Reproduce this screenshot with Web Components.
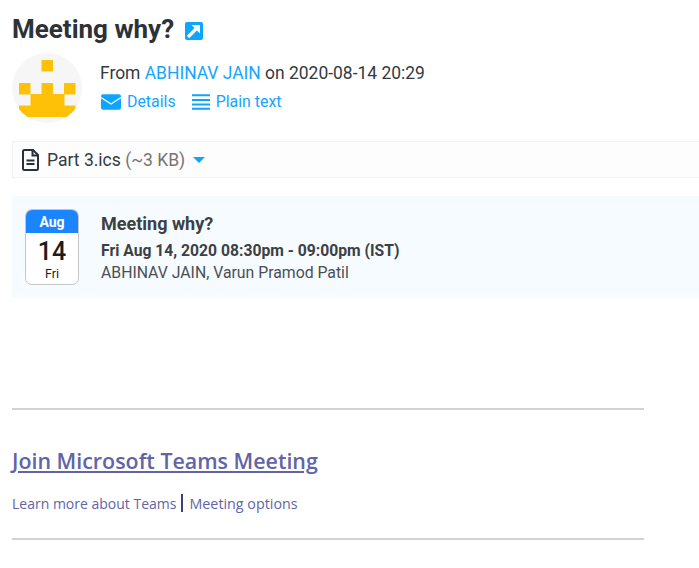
<!doctype html>
<html><head><meta charset="utf-8">
<style>
html,body{margin:0;padding:0;background:#fff;overflow:hidden}
body{font-family:Roboto,sans-serif;color:#343a40;width:699px;height:568px}
</style></head><body>
<mail-view></mail-view>
<template id="t-head"><style>
:host{display:block;padding:12px 0 0 12px}
h1{margin:0;font:700 26px/34px Roboto,sans-serif;color:#2b3238;display:flex;align-items:center;gap:11px}
svg{display:block}
h1 svg{margin-top:3px}
.row{display:flex;margin-top:7px;gap:18px}
.av{display:block;flex:none}
.meta{padding-top:8px;font-size:17.450px;line-height:24px;color:#343a40}
a{color:#14a5ff;text-decoration:none}
.links{display:flex;gap:16px;margin-top:5px;margin-left:1px;font-size:15.900px}
.links a{display:flex;align-items:center;gap:6px}
</style>
<h1>Meeting why?<svg width="18" height="18" viewBox="0 0 18 18"><rect width="18" height="18" rx="2" fill="#0ea5ff"/><path d="M3 15 L11 7" stroke="#fff" stroke-width="3.200" fill="none"/><path d="M6.500 3H15V11.500Z" fill="#fff"/></svg></h1>
<div class="row">
<svg class="av" width="70" height="70" viewBox="0 0 70 70"><defs><clipPath id="c"><circle cx="35" cy="35" r="35"/></clipPath></defs><circle cx="35" cy="35" r="35" fill="#f6f6f6"/><g clip-path="url(#c)" fill="#ffc107"><rect x="29.500" y="7" width="11.500" height="11.500"/><rect x="7" y="30" width="11.500" height="11.500"/><rect x="29.500" y="30" width="11.500" height="11.500"/><rect x="52" y="30" width="11.500" height="11.500"/><rect x="18.500" y="41" width="34" height="12"/><rect x="7" y="52.500" width="56.500" height="11.500"/></g></svg>
<div class="meta"><div>From <a href="#">ABHINAV JAIN</a> on 2020-08-14 20:29</div>
<div class="links"><a href="#"><svg width="20" height="16" viewBox="0 0 20 16"><rect width="20" height="15.500" y=".2" rx="2" fill="#0ea5ff"/><path d="M0 3.500L10 10L20 3.500" stroke="#fff" stroke-width="1.300" fill="none"/></svg>Details</a><a href="#"><svg width="18" height="16" viewBox="0 0 18 16"><path d="M0 1.300H18M0 6H18M0 10.400H18M0 14.800H18" stroke="#0ea5ff" stroke-width="2"/></svg>Plain text</a></div></div>
</div></template>
<template id="t-file"><style>
:host{display:flex;margin:18px 0 0 12px;height:35px;border:1px solid #f1f1f1;border-right:0;background:#fdfdfd;align-items:center;padding-left:9px;font-size:17.500px;color:#343a40}
svg{flex:none;margin-right:8px}
.s{color:#757575}
.caret{margin-left:8px;width:0;height:0;border:6.500px solid transparent;border-top:6.500px solid #0ea5ff;border-bottom:0}
</style>
<svg width="17" height="22" viewBox="0 0 17 22"><path d="M2.500 1H11L16 6V19.500A1.500 1.500 0 0 1 14.500 21H2.500A1.500 1.500 0 0 1 1 19.500V2.500A1.500 1.500 0 0 1 2.500 1Z" fill="none" stroke="#2b2f36" stroke-width="2"/><path d="M10.500 1V6.500H16M4.500 11.500H12.500M4.500 15H12.500" fill="none" stroke="#2b2f36" stroke-width="2"/></svg><span class="name">Part 3.ics <span class="s">(~3 KB)</span></span><i class="caret"></i></template>
<template id="t-event"><style>
:host{display:flex;margin:18px 0 0 12px;height:102px;background:#f5fbff;border-radius:3px 0 0 3px;padding:13px 0 0 13px;box-sizing:border-box;gap:22px;color:#3c4043}
.cal{width:54px;height:76px;box-sizing:border-box;border:1.500px solid #c6c6c6;border-radius:7px;background:#fff;overflow:hidden;text-align:center;color:#1c1c1c;flex:none}
.m{background:#1a85ff;color:#fff;font:700 14px/25px Roboto,sans-serif;height:23px}
.d{font:500 25px/30px Roboto,sans-serif;margin-top:4px}
.w{font:400 12.500px/14px Roboto,sans-serif}
.t{font:700 18px/24px Roboto,sans-serif;margin-top:3px}
.w2{font:700 15.700px/20px Roboto,sans-serif;margin-top:5px}
.p{font-size:15.800px;line-height:20px;margin-top:2px;color:#4a4f54}
</style>
<div class="cal"><div class="m">Aug</div><div class="d">14</div><div class="w">Fri</div></div>
<div><div class="t">Meeting why?</div><div class="w2">Fri Aug 14, 2020 08:30pm - 09:00pm (IST)</div><div class="p">ABHINAV JAIN, Varun Pramod Patil</div></div></template>
<template id="t-teams"><style>
:host{display:block;margin:110px 0 0 12px;width:632px;font-family:"Open Sans",sans-serif;color:#6264a7}
hr{margin:0;border:0;height:2px;background:#d2d2d2}
a{color:#6264a7}
.j{font-size:21.400px;line-height:30px;margin-top:36px;font-weight:600}
.l{margin-top:15px;font-size:14px;height:24px;display:flex;align-items:center}
.l a{text-decoration:none}
.l a+i+a{font-size:14.300px}
.l i{width:2px;height:18px;background:#3b3f7a;margin:0 6px 0 5px}
hr.b{margin-top:23px}
</style>
<hr><div class="j"><a href="#">Join Microsoft Teams Meeting</a></div>
<div class="l"><a href="#">Learn more about Teams</a><i></i><a href="#">Meeting options</a></div><hr class="b"></template>
<template id="t-view"><style>:host{display:block}</style><mail-head></mail-head><mail-file></mail-file><mail-event></mail-event><teams-block></teams-block></template>
<script>
const def=(n,t)=>customElements.define(n,class extends HTMLElement{constructor(){super();this.attachShadow({mode:'open'}).append(document.getElementById(t).content.cloneNode(true))}});
def('mail-head','t-head');def('mail-file','t-file');def('mail-event','t-event');def('teams-block','t-teams');def('mail-view','t-view');
</script>
</body></html>
